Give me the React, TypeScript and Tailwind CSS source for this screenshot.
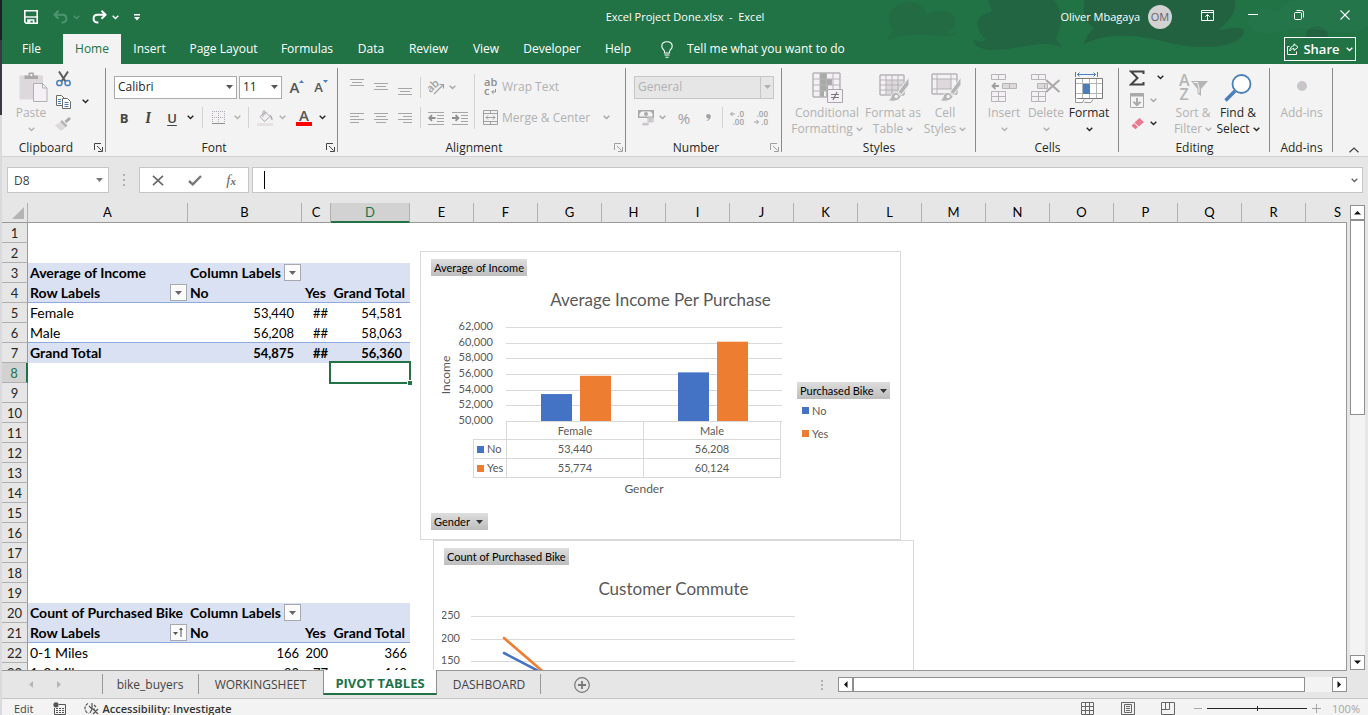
import { useState } from "react";
import type { ReactNode } from "react";

const RIBBON_TABS = [
  { name: "File", width: "w-[59px]" },
  { name: "Home", width: "w-[58px] ml-[2px]" },
  { name: "Insert", width: "w-[57px]" },
  { name: "Page Layout", width: "w-[91px]" },
  { name: "Formulas", width: "w-[76px]" },
  { name: "Data", width: "w-[52px]" },
  { name: "Review", width: "w-[63px]" },
  { name: "View", width: "w-[52px]" },
  { name: "Developer", width: "w-[80px]" },
  { name: "Help", width: "w-[52px]" },
];

const COLUMNS = "ABCDEFGHIJKLMNOPQRSTUVWXYZ".split("");

const SHEET_TABS = [
  { name: "bike_buyers", width: "w-[96px]" },
  { name: "WORKINGSHEET", width: "w-[125px]" },
  { name: "PIVOT TABLES", width: "w-[114px]" },
  { name: "DASHBOARD", width: "w-[104px]" },
];

type PivotRow = {
  kind: "title" | "head" | "item" | "last" | "total";
  cells: string[];
  inset?: boolean;
  sorted?: boolean;
};

const PIVOT_ROWS: Record<number, PivotRow> = {
  3: { kind: "title", cells: ["Average of Income", "Column Labels", "", ""] },
  4: { kind: "head", cells: ["Row Labels", "No", "Yes", "Grand Total"] },
  5: { kind: "item", cells: ["Female", "53,440", "##", "54,581"], inset: true },
  6: { kind: "last", cells: ["Male", "56,208", "##", "58,063"], inset: true },
  7: { kind: "total", cells: ["Grand Total", "54,875", "##", "56,360"], inset: true },
  20: { kind: "title", cells: ["Count of Purchased Bike", "Column Labels", "", ""] },
  21: { kind: "head", cells: ["Row Labels", "No", "Yes", "Grand Total"], sorted: true },
  22: { kind: "item", cells: ["0-1 Miles", "166", "200", "366"] },
  23: { kind: "item", cells: ["1-2 Miles", "92", "77", "169"] },
};

function Chevron({ className = "text-[#262626]" }: { className?: string }) {
  return (
    <svg width="7" height="5" viewBox="0 0 7 5" className={`shrink-0 ${className}`} aria-hidden="true">
      <path d="M0.7 0.8L3.5 3.6L6.3 0.8" fill="none" stroke="currentColor" strokeWidth="1.4" />
    </svg>
  );
}

function Caret({ className = "text-[#555]" }: { className?: string }) {
  return (
    <svg width="7" height="4" viewBox="0 0 7 4" className={`shrink-0 ${className}`} aria-hidden="true">
      <path d="M0 0H7L3.5 4Z" fill="currentColor" />
    </svg>
  );
}

function Tool({ label, className, children }: { label: string; className: string; children: ReactNode }) {
  return (
    <button type="button" aria-label={label} className={`flex h-[23px] shrink-0 items-center justify-center ${className}`}>
      {children}
    </button>
  );
}

function Divider({ className = "" }: { className?: string }) {
  return <span className={`h-[21px] w-px shrink-0 bg-[#d2d2d2] ${className}`} />;
}

function Group({ label, width, launcher, muted, children }: { label: string; width: string; launcher?: boolean; muted?: boolean; children: ReactNode }) {
  return (
    <section className={`relative flex shrink-0 flex-col pt-2 ${width}`}>
      <div className="flex h-[75px] items-start">{children}</div>
      <div className="flex h-[19px] items-center">
        <h2 className={`flex-1 text-center text-[#262626] ${launcher ? "pr-1" : ""}`}>{label}</h2>
        {launcher && (
          <button type="button" aria-label={`${label} settings`} className={`flex w-3 justify-start ${muted ? "text-[#a0a0a0]" : "text-[#444]"}`}>
            <svg width="9" height="9" viewBox="0 0 9 9" fill="none" stroke="currentColor">
              <path d="M0.5 7V0.5H7M3 3L7.5 7.5M8.5 4V8.5H4" />
            </svg>
          </button>
        )}
      </div>
      <span className="absolute top-1 right-0 h-[84px] w-px bg-[#8a8a8a]" />
    </section>
  );
}

function BigButton({ icon, lines, width, enabled, arrow = true }: { icon: ReactNode; lines: string[]; width: string; enabled?: boolean; arrow?: boolean }) {
  const single = lines.length === 1;
  return (
    <button type="button" className={`flex shrink-0 flex-col items-center leading-4 ${width} ${enabled ? "text-[#262626]" : "text-[#b1b1b1]"}`}>
      <span className="mb-[2px] flex h-[31px] items-center">{icon}</span>
      <span className="whitespace-nowrap">{lines[0]}</span>
      <span className="flex h-4 items-center gap-[3px] whitespace-nowrap">
        {!single && lines[1]}
        {arrow && <Chevron className="text-current" />}
      </span>
    </button>
  );
}

function TitleBar() {
  return (
    <div className="relative grid h-[34px] grid-cols-[1fr_auto_1fr] items-center text-[11px]">
      <div className="flex items-center pl-[22px]">
        <button type="button" aria-label="Save">
          <svg width="14" height="14" viewBox="0 0 14 14" fill="none" stroke="#fff" strokeWidth="1.6">
            <path d="M0.8 0.8H13.2V13.2H2.2L0.8 11.8Z" />
            <path d="M0.8 7H13.2" strokeWidth="1.4" />
            <path d="M4 13V10H9.6V13" />
            <path d="M5.6 10V12.6" strokeWidth="1.8" />
          </svg>
        </button>
        <button type="button" aria-label="Undo" className="ml-[15px] flex items-center gap-[5px] text-[#4f9470]">
          <svg width="15" height="14" viewBox="0 0 15 14" fill="none" stroke="currentColor" strokeWidth="2">
            <path d="M5.5 0.8L1.5 4.8L5.5 8.8M2 4.8H9.5C12 4.8 13.4 6.6 13.4 8.6C13.4 10.6 12 12.4 9.8 12.6H8.6" />
          </svg>
          <Chevron className="text-current" />
        </button>
        <button type="button" aria-label="Redo" className="ml-[12px] flex items-center gap-[5px] text-white">
          <svg width="15" height="14" viewBox="0 0 15 14" fill="none" stroke="currentColor" strokeWidth="2">
            <path d="M9.5 0.8L13.5 4.8L9.5 8.8M13 4.8H5.5C3 4.8 1.6 6.6 1.6 8.6C1.6 10.6 3 12.4 5.2 12.6H6.4" />
          </svg>
          <Chevron className="text-current" />
        </button>
        <button type="button" aria-label="Customize quick access toolbar" className="ml-[15px] text-white">
          <svg width="6" height="7" viewBox="0 0 6 7">
            <path d="M0 0H6V1.4H0ZM0 3H6L3 6.5Z" fill="currentColor" />
          </svg>
        </button>
      </div>
      <h1 className="whitespace-pre">Excel Project Done.xlsx  -  Excel</h1>
      <div className="flex items-center justify-end">
        <button type="button" className="flex items-center gap-2">
          <span>Oliver Mbagaya</span>
          <span className="flex size-6 items-center justify-center rounded-full bg-[#d2d2d2] text-[#5d6470]">OM</span>
        </button>
        <button type="button" aria-label="Ribbon display options" className="ml-3 flex w-[46px] justify-center pb-1">
          <svg width="13" height="11" viewBox="0 0 13 11" fill="none" stroke="#fff">
            <path d="M0.5 0.5H12.5V10.5H0.5ZM0.5 2.5H12.5M6.5 10V4.8M4.3 6.7L6.5 4.5L8.7 6.7" />
          </svg>
        </button>
        <button type="button" aria-label="Minimize" className="flex w-[46px] justify-center pb-1">
          <svg width="10" height="10" viewBox="0 0 10 10"><path d="M0 4.5H10" stroke="#fff" /></svg>
        </button>
        <button type="button" aria-label="Restore" className="flex w-[46px] justify-center pb-1">
          <svg width="10" height="10" viewBox="0 0 10 10" fill="none" stroke="#fff">
            <rect x="0.5" y="2.5" width="7" height="7" rx="1" />
            <path d="M2.5 0.5H7.5Q9.5 0.5 9.5 2.5V7.5" />
          </svg>
        </button>
        <button type="button" aria-label="Close" className="flex w-[46px] justify-center pb-1">
          <svg width="10" height="10" viewBox="0 0 10 10" stroke="#fff" strokeWidth="1.1"><path d="M0.5 0.5L9.5 9.5M9.5 0.5L0.5 9.5" /></svg>
        </button>
      </div>
    </div>
  );
}

function Header({ tab, onTab }: { tab: string; onTab: (t: string) => void }) {
  return (
    <header className="relative bg-[#217346] text-white">
      <svg width="500" height="64" viewBox="0 0 500 64" className="absolute top-0 right-0" aria-hidden="true">
        <g fill="#236241">
          <path d="M20 40C20 36 24 33 25 30C16 20 22 2 42 2C52 2 56 10 60 14C70 10 84 10 87 18C89 28 82 32 76 33C84 34 88 33 91 32C80 42 50 28 20 40Z" opacity="0.45" />
          <path d="M105 39C110 42 116 42 118 40C104 26 108 14 124 12L120 0H186C196 14 194 24 188 38L194 48C178 38 150 50 124 50C112 50 104 44 105 39Z" opacity="0.8" />
          <path d="M216 0H367C370 14 356 26 350 30C360 30 376 24 376 32C372 48 334 50 306 44C270 34 240 32 216 44C217 38 222 32 226 28C214 20 216 10 216 0Z" />
          <path d="M438 37C438 29 443 26 449 26C455 26 460 30 460 37Z" />
        </g>
        <path d="M380 24C380 10 396 4 410 12C414 2 426 0 440 0H500V26C480 40 440 24 420 30C400 36 384 34 380 24Z" fill="#2b7b4f" opacity="0.4" />
      </svg>
      <TitleBar />
      <div className="relative flex h-[30px] items-stretch">
        <nav className="flex">
          {RIBBON_TABS.map((t) => (
            <button
              key={t.name}
              type="button"
              onClick={() => onTab(t.name)}
              className={`whitespace-nowrap ${t.width} ${tab === t.name ? "bg-[#f3f3f3] text-[#217346]" : ""}`}
            >
              {t.name}
            </button>
          ))}
        </nav>
        <button type="button" className="flex items-center gap-[14px] pl-[17px] whitespace-nowrap">
          <svg width="12" height="17" viewBox="0 0 12 17" fill="none" stroke="#fff" strokeWidth="1.1">
            <path d="M3.5 12V10.5C3.5 9 0.8 8 0.8 5.2C0.8 2.5 3 0.7 6 0.7S11.2 2.5 11.2 5.2C11.2 8 8.5 9 8.5 10.5V12ZM3.5 14H8.5M4.5 16.2H7.5" />
          </svg>
          Tell me what you want to do
        </button>
        <button type="button" className="mt-[3px] mr-3 ml-auto flex h-6 w-[72px] items-center justify-center gap-1 border border-white text-[13px] font-semibold">
          <svg width="12" height="12" viewBox="0 0 12 12" fill="none" stroke="#fff">
            <path d="M2.5 3.5H0.5V11.5H9.5V8.5M7 0.8L11 4.2L7 7.5V5.5C5 5.5 3.8 6.5 2.8 8C2.8 5 4.5 3 7 2.8Z" />
          </svg>
          Share
          <Chevron className="ml-[2px] text-current" />
        </button>
      </div>
    </header>
  );
}

function Lines({ align, count, offset }: { align: "left" | "center" | "right"; count: number; offset: number }) {
  const short = { left: [0, 9], center: [2, 12], right: [5, 14] }[align];
  return (
    <svg width="14" height="18" viewBox="0 0 14 18" stroke="#a6a6a6" aria-hidden="true">
      {Array.from({ length: count }, (_, i) => (
        <path key={i} d={`M${i % 2 ? short[0] : 0} ${offset + i * 3 + 0.5}H${i % 2 ? short[1] : 14}`} />
      ))}
    </svg>
  );
}

function Indent({ out }: { out?: boolean }) {
  return (
    <svg width="17" height="14" viewBox="0 0 17 14" fill="none" stroke="#a6a6a6" aria-hidden="true">
      <path d="M0 1.5H16M9 4.5H16M9 7.5H16M9 10.5H16M0 13.5H16" />
      <path d={out ? "M7.5 7H1.5M4 4.2L1.2 7L4 9.8" : "M0 7H6M3.6 4.2L6.4 7L3.6 9.8"} stroke="#8f8f8f" strokeWidth="1.8" />
    </svg>
  );
}

function Brush() {
  return (
    <g>
      <path d="M31 5L20 20L23.5 22.5L31 13Z" fill="#b5b5b5" stroke="#f3f3f3" />
      <path d="M19 20.5C15.5 20 13.5 22 13 25C12.6 26.8 11 28 9.5 28.3C14 30 21 29.5 23 24.5Z" fill="#b5b5b5" stroke="#f3f3f3" />
      <circle cx="18.2" cy="24.5" r="2.2" fill="#f3f3f3" />
    </g>
  );
}

function ClipboardGroup() {
  return (
    <Group label="Clipboard" width="w-[104px]" launcher>
      <div className="flex pl-[9px]">
        <BigButton
          width="w-10"
          lines={["Paste"]}
          icon={
            <svg width="29" height="31" viewBox="0 0 29 31" className="ml-[5px]">
              <path d="M0.5 3.5H24V27.5H0.5Z" fill="#dcd8dc" />
              <path d="M5.5 3.5H9.5V1.5Q9.5 0.5 10.5 0.5H14Q15 0.5 15 1.5V3.5H19V7H5.5Z" fill="#a9a9a9" />
              <rect x="11.3" y="2" width="2" height="2" fill="#f3f3f3" />
              <path d="M14.5 11.5H23.5L28 16V29.5H14.5Z" fill="#f4f0f6" stroke="#b0b0b0" />
              <path d="M23.5 11.5V16H28" fill="none" stroke="#b0b0b0" />
            </svg>
          }
        />
      </div>
      <div className="-mt-[5px] flex flex-col">
        <Tool label="Cut" className="w-6">
          <svg width="15" height="16" viewBox="0 0 15 16" fill="none">
            <path d="M3 0.5L9.5 10.5M12 0.5L5.5 10.5" stroke="#5c5c5c" strokeWidth="2" />
            <circle cx="3.4" cy="12" r="2.6" stroke="#4a7fbb" strokeWidth="1.5" />
            <circle cx="11.6" cy="12" r="2.6" stroke="#4a7fbb" strokeWidth="1.5" />
          </svg>
        </Tool>
        <div className="flex">
          <Tool label="Copy" className="w-6">
            <svg width="15" height="14" viewBox="0 0 15 14" fill="#fff" stroke="#6a6a6a">
              <path d="M0.5 0.5H5.5L8.5 3.5V10.5H0.5Z" />
              <path d="M6.5 3.5H11.5L14.5 6.5V13.5H6.5Z" />
              <path d="M2 4.5H5M2 6.5H5M2 8.5H5M8.5 7.5H12.5M8.5 9.5H12.5M8.5 11.5H12.5" stroke="#4a7fbb" />
            </svg>
          </Tool>
          <Tool label="Copy options" className="w-5"><Chevron /></Tool>
        </div>
        <Tool label="Format painter" className="w-6">
          <svg width="16" height="15" viewBox="0 0 16 15">
            <path d="M14 0L16 2L11.5 6L9.5 4Z" fill="#a9a9a9" />
            <path d="M7 3L12.5 8.5L10.5 10.5L5 5Z" fill="#b5b5b5" />
            <path d="M4.5 5.5L10 11L6 14L0 8.5Z" fill="#dcd8dc" />
          </svg>
        </Tool>
      </div>
    </Group>
  );
}

function FontGroup() {
  return (
    <Group label="Font" width="w-[232px]" launcher>
      <div className="flex flex-col pl-2">
        <div className="flex h-[30px] items-center">
          <label className="relative flex items-center">
            <span className="sr-only">Font name</span>
            <select className="h-[23px] w-[123px] appearance-none border border-[#ababab] bg-white pl-[3px] text-[#262626]">
              <option>Calibri</option>
            </select>
            <Caret className="pointer-events-none absolute right-1 text-[#555]" />
          </label>
          <label className="relative ml-[2px] flex items-center">
            <span className="sr-only">Font size</span>
            <select className="h-[23px] w-[43px] appearance-none border border-[#ababab] bg-white pl-[3px] text-[#262626]">
              <option>11</option>
            </select>
            <Caret className="pointer-events-none absolute right-1 text-[#555]" />
          </label>
          <Tool label="Increase font size" className="ml-[3px] w-6 text-[15px] font-semibold text-[#555]">
            A
            <svg width="5" height="3" viewBox="0 0 5 3" className="mb-3"><path d="M0 3H5L2.5 0Z" fill="#4a7fbb" /></svg>
          </Tool>
          <Tool label="Decrease font size" className="w-6 text-[13px] font-semibold text-[#555]">
            A
            <svg width="5" height="3" viewBox="0 0 5 3" className="mb-3"><path d="M0 0H5L2.5 3Z" fill="#4a7fbb" /></svg>
          </Tool>
        </div>
        <div className="-ml-[2px] flex h-[31px] items-center">
          <Tool label="Bold" className="w-6 text-[13px] font-bold text-[#444]">B</Tool>
          <Tool label="Italic" className="w-6 font-serif text-[15px] font-semibold text-[#444] italic">I</Tool>
          <Tool label="Underline" className="w-6 text-[13px] font-semibold text-[#444] underline underline-offset-2">U</Tool>
          <Tool label="Underline options" className="w-3"><Chevron /></Tool>
          <Divider className="mx-[6px]" />
          <Tool label="Borders" className="w-5">
            <svg width="14" height="14" viewBox="0 0 14 14" fill="none" stroke="#b1a8b5" strokeDasharray="1 1">
              <path d="M0.5 0V13M6.5 0V13M12.5 0V13M0 0.5H13M0 6.5H13" />
              <path d="M0 12.5H13" stroke="#8f8f8f" strokeDasharray="none" />
            </svg>
          </Tool>
          <Tool label="Border options" className="w-4"><Chevron className="text-[#b1b1b1]" /></Tool>
          <Divider className="mx-[3px]" />
          <Tool label="Fill color" className="w-[26px]">
            <svg width="17" height="16" viewBox="0 0 17 16" fill="none">
              <path d="M3 6.5L8.5 2L13 6.5L7.5 11.5Z" fill="#f4f0f6" stroke="#a9a9a9" />
              <path d="M6 7V1.5Q7 0 8 1.5V5" stroke="#a9a9a9" />
              <path d="M12.5 4.5Q16 6 15.5 10.5Q13.5 10 13.5 7Z" fill="#a9a9a9" />
              <path d="M0 13H16V16H0Z" fill="#e5e1e5" />
            </svg>
          </Tool>
          <Tool label="Fill options" className="w-2"><Chevron className="text-[#b1b1b1]" /></Tool>
          <Tool label="Font color" className="ml-1 w-7 flex-col text-[15px] leading-3 font-semibold text-[#555]">
            A
            <span className="mt-px h-1 w-4 bg-[#f00]" />
          </Tool>
          <Tool label="Font color options" className="w-2"><Chevron /></Tool>
        </div>
      </div>
    </Group>
  );
}

function AlignmentGroup() {
  return (
    <Group label="Alignment" width="w-[288px]" launcher muted>
      <div className="flex flex-col pl-[7px]">
        <div className="flex h-[30px] items-center">
          <Tool label="Top align" className="w-6"><Lines align="center" count={3} offset={1} /></Tool>
          <Tool label="Middle align" className="w-6"><Lines align="center" count={3} offset={5} /></Tool>
          <Tool label="Bottom align" className="w-6"><Lines align="center" count={3} offset={10} /></Tool>
          <Divider className="mx-[3px]" />
          <Tool label="Orientation" className="w-6">
            <svg width="17" height="16" viewBox="0 0 17 16" fill="none" stroke="#a0a0a0">
              <text x="-1" y="10" transform="rotate(-45 6 8)" fontSize="11" fontWeight="600" fill="#a0a0a0" stroke="none">ab</text>
              <path d="M6 15L15 6M11.5 5.5H15.5V9.5" strokeWidth="1.2" />
            </svg>
          </Tool>
          <Tool label="Orientation options" className="w-2"><Chevron className="text-[#a6a6a6]" /></Tool>
        </div>
        <div className="flex h-[31px] items-center">
          <Tool label="Align left" className="w-6"><Lines align="left" count={4} offset={4} /></Tool>
          <Tool label="Center" className="w-6"><Lines align="center" count={4} offset={4} /></Tool>
          <Tool label="Align right" className="w-6"><Lines align="right" count={4} offset={4} /></Tool>
          <Divider className="mx-[3px]" />
          <Tool label="Decrease indent" className="w-6"><Indent out /></Tool>
          <Tool label="Increase indent" className="w-6"><Indent /></Tool>
        </div>
      </div>
      <span className="mt-[2px] ml-[2px] h-[55px] w-px bg-[#d2d2d2]" />
      <div className="flex flex-col pl-2 text-[#b1b1b1]">
        <button type="button" className="flex h-[30px] items-center gap-1">
          <svg width="15" height="18" viewBox="0 0 15 18" fill="#8f8f8f">
            <text x="1" y="8" fontSize="11" fontWeight="600">ab</text>
            <text x="1" y="17" fontSize="11" fontWeight="600">c</text>
            <path d="M12.5 11V14H9M10.5 12.2L8.7 14L10.5 15.8" fill="none" stroke="#8f8f8f" />
          </svg>
          Wrap Text
        </button>
        <div className="flex h-[31px] items-center">
          <button type="button" className="flex items-center gap-1 whitespace-nowrap">
            <svg width="15" height="15" viewBox="0 0 15 15" fill="none" stroke="#a0a0a0">
              <path d="M0.5 0.5H14.5V14.5H0.5ZM0.5 3.5H14.5M0.5 11.5H14.5M7.5 0.5V3.5M7.5 11.5V14.5M3 7.5H12M5 5.5L3 7.5L5 9.5M10 5.5L12 7.5L10 9.5" />
            </svg>
            Merge &amp; Center
          </button>
          <Tool label="Merge options" className="w-8"><Chevron className="text-[#a6a6a6]" /></Tool>
        </div>
      </div>
    </Group>
  );
}

function Decimals({ up }: { up?: boolean }) {
  return (
    <svg width="16" height="16" viewBox="0 0 16 16" fill="#a0a0a0" aria-hidden="true">
      <text x="15" y="7" fontSize="8" textAnchor="end" fontWeight="600">{up ? ".0" : ".00"}</text>
      <text x="15" y="15" fontSize="8" textAnchor="end" fontWeight="600">{up ? ".00" : ".0"}</text>
      <path d={up ? "M6 4H1.5M3.5 2L1.5 4L3.5 6" : "M1 12H5.5M3.5 10L5.5 12L3.5 14"} fill="none" stroke="#a0a0a0" />
    </svg>
  );
}

function NumberGroup() {
  return (
    <Group label="Number" width="w-[156px]" launcher muted>
      <div className="flex flex-col pl-2">
        <div className="flex h-[30px] items-center">
          <label className="relative flex items-center">
            <span className="sr-only">Number format</span>
            <select className="h-[23px] w-[140px] appearance-none border border-[#c6c6c6] bg-[#e6e6e6] pl-[3px] text-[#b1b1b1]">
              <option>General</option>
            </select>
            <span className="pointer-events-none absolute right-0 flex h-[23px] w-[14px] items-center justify-center border-l border-[#c6c6c6]">
              <Caret className="text-[#b1b1b1]" />
            </span>
          </label>
        </div>
        <div className="flex h-[31px] items-center">
          <Tool label="Accounting format" className="w-6">
            <svg width="17" height="16" viewBox="0 0 17 16">
              <path d="M0 0H16V8H0Z" fill="#a9a9a9" />
              <path d="M1.5 1.5H14.5V6.5H1.5Z" fill="#f3f3f3" />
              <circle cx="8" cy="4" r="2" fill="#a9a9a9" />
              <path d="M1 1H4L1 4ZM12 1H15V4Z" fill="#a9a9a9" />
              <ellipse cx="12.5" cy="8.5" rx="3.5" ry="1.5" fill="#ccc6cc" />
              <ellipse cx="12.5" cy="11.2" rx="3.5" ry="1.3" fill="#ccc6cc" />
              <ellipse cx="7.5" cy="14" rx="3.5" ry="1.5" fill="#ccc6cc" />
            </svg>
          </Tool>
          <Tool label="Accounting options" className="w-2"><Chevron className="text-[#a6a6a6]" /></Tool>
          <Tool label="Percent" className="ml-[6px] w-6 text-[15px] leading-4 text-[#a0a0a0]">%</Tool>
          <Tool label="Comma" className="w-6">
            <svg width="5" height="7" viewBox="0 0 5 7" fill="#a0a0a0">
              <path d="M2.3 0C3.9 0 4.8 1 4.8 2.6C4.8 4.8 3.2 6.4 1 7L0.7 6.3C1.8 5.9 2.6 5.2 2.7 4.2C1.2 4.5 0.2 3.6 0.2 2.2C0.2 0.9 1.1 0 2.3 0Z" />
            </svg>
          </Tool>
          <Divider className="mx-[2px]" />
          <Tool label="Increase decimal" className="w-6"><Decimals up /></Tool>
          <Tool label="Decrease decimal" className="w-6"><Decimals /></Tool>
        </div>
      </div>
    </Group>
  );
}

function StylesGroup() {
  return (
    <Group label="Styles" width="w-[194px]">
      <div className="flex pl-2">
        <BigButton
          width="w-[74px]"
          lines={["Conditional", "Formatting"]}
          icon={
            <svg width="31" height="32" viewBox="0 0 31 32" fill="none" stroke="#b5b5b5">
              <path d="M1 1H28V25H1Z" fill="#f4f0f6" />
              <path d="M8 1H14V7H20V13H16V19H12V25H8Z" fill="#a9a9a9" stroke="none" />
              <path d="M1 1H28V25H1ZM1 7H28M1 13H28M1 19H28M8 1V25M14.5 1V25M21 1V25" />
              <path d="M15.5 17.5H30.5V30.5H15.5Z" fill="#f4f0f6" stroke="#a9a9a9" />
              <path d="M19 22.5H27M19 25.5H27M25 20L21 28" stroke="#777" strokeWidth="1.2" />
            </svg>
          }
        />
        <BigButton
          width="w-[58px]"
          lines={["Format as", "Table"]}
          icon={
            <svg width="31" height="31" viewBox="0 0 31 31" fill="none" stroke="#b5b5b5">
              <path d="M2 3H26V23H2Z" fill="#f4f0f6" />
              <path d="M8 8H26V23H8Z" fill="#dcd8dc" stroke="none" />
              <path d="M2 3H26V23H2ZM2 8H26M2 13H26M2 18H26M8 3V23M14 3V23M20 3V23" />
              <Brush />
            </svg>
          }
        />
        <BigButton
          width="w-[46px]"
          lines={["Cell", "Styles"]}
          icon={
            <svg width="31" height="31" viewBox="0 0 31 31" fill="none" stroke="#b5b5b5">
              <path d="M2 2H27V22H2Z" fill="#f4f0f6" />
              <path d="M7 7H21V17H7Z" fill="#dcd8dc" stroke="none" />
              <path d="M2 2H27V22H2ZM2 7H27M2 17H27M7 2V22M21 2V22" />
              <Brush />
            </svg>
          }
        />
      </div>
    </Group>
  );
}

function CellsGroup() {
  return (
    <Group label="Cells" width="w-[143px]">
      <div className="flex pl-2">
        <BigButton
          width="w-10"
          lines={["Insert"]}
          icon={
            <svg width="28" height="28" viewBox="0 0 28 28" fill="#f4f0f6" stroke="#b5b5b5">
              <path d="M1.5 0.5H15.5V5.5H1.5ZM8.5 0.5V5.5M1.5 17.5H15.5V27.5H1.5ZM8.5 17.5V27.5M1.5 22.5H15.5" />
              <path d="M12.5 9.5H26.5V14.5H12.5ZM19.5 9.5V14.5" fill="#dcd8dc" />
              <path d="M9 12H3M5.5 9L2.5 12L5.5 15" fill="none" stroke="#a0a0a0" strokeWidth="1.8" />
            </svg>
          }
        />
        <BigButton
          width="w-11"
          lines={["Delete"]}
          icon={
            <svg width="30" height="28" viewBox="0 0 30 28" fill="#f4f0f6" stroke="#b5b5b5">
              <path d="M0.5 0.5H14.5V5.5H0.5ZM7.5 0.5V5.5M0.5 17.5H14.5V27.5H0.5ZM7.5 17.5V27.5M0.5 22.5H14.5" />
              <path d="M6.5 9.5H16.5V14.5H6.5ZM13.5 9.5V14.5" fill="#dcd8dc" />
              <path d="M15 6L28.5 18M28.5 6L15 18" fill="none" stroke="#a9a9a9" strokeWidth="2" />
            </svg>
          }
        />
        <BigButton
          enabled
          width="w-[42px]"
          lines={["Format"]}
          icon={
            <svg width="29" height="32" viewBox="0 0 29 32" fill="#fff" stroke="#7a7a7a">
              <path d="M0.5 0V5M22.5 0V5M2 2.5H21M4.5 0.5L2.5 2.5L4.5 4.5M18.5 0.5L20.5 2.5L18.5 4.5" fill="none" stroke="#4a7fbb" />
              <path d="M0.5 6.5H27.5V26.5H0.5Z" />
              <path d="M1 11.5H27M1 21.5H27M7.5 7V26M14.5 7V26M21.5 7V26" stroke="#b5b5b5" />
              <path d="M8 12H15V22H8Z" fill="#4a7fbb" stroke="none" />
              <path d="M0.5 26.5V30.5H7.5L9 27.5M9.5 30.5H16L18 27.5" fill="#fff" stroke="#9a9a9a" />
            </svg>
          }
        />
      </div>
    </Group>
  );
}

function EditingGroup() {
  return (
    <Group label="Editing" width="w-[151px]">
      <div className="-mt-[6px] flex w-14 flex-col pl-[6px]">
        <div className="flex">
          <Tool label="AutoSum" className="w-6">
            <svg width="16" height="16" viewBox="0 0 16 16" fill="none" stroke="#444" strokeWidth="2">
              <path d="M14.5 4V1.5H2L8.5 8L2 14.5H14.5V12" />
            </svg>
          </Tool>
          <Tool label="AutoSum options" className="w-[22px]"><Chevron /></Tool>
        </div>
        <div className="flex">
          <Tool label="Fill" className="w-6">
            <svg width="14" height="15" viewBox="0 0 14 15" fill="none" stroke="#a9a9a9">
              <path d="M0.5 0.5H13.5V14.5H0.5Z" />
              <path d="M0.5 1H13.5V3H0.5Z" fill="#a9a9a9" />
              <path d="M7 5V12M3.5 8.8L7 12.2L10.5 8.8" strokeWidth="2" />
            </svg>
          </Tool>
          <Tool label="Fill options" className="w-2"><Chevron className="text-[#a6a6a6]" /></Tool>
        </div>
        <div className="flex">
          <Tool label="Clear" className="w-6">
            <svg width="13" height="12" viewBox="0 0 13 12" fill="#e8798f">
              <path d="M8.5 0L13 4L8 8.5L3.5 4.5Z" />
              <path d="M3 5.2L7 9L4.5 11.2L0.5 8Z" />
            </svg>
          </Tool>
          <Tool label="Clear options" className="w-2"><Chevron /></Tool>
        </div>
      </div>
      <BigButton
        width="w-9"
        lines={["Sort &", "Filter"]}
        icon={
          <svg width="29" height="29" viewBox="0 0 29 29" fill="#b5b5b5">
            <text x="0" y="13" fontSize="16" fontWeight="600">A</text>
            <text x="0.5" y="27" fontSize="16" fontWeight="600">Z</text>
            <path d="M12 8H29L22 16V23L18.5 20.5V16Z" />
            <path d="M14.5 9.5H18.5L20 15V20" fill="none" stroke="#f3f3f3" />
          </svg>
        }
      />
      <BigButton
        enabled
        width="w-[54px]"
        lines={["Find &", "Select"]}
        icon={
          <svg width="28" height="28" viewBox="0 0 28 28" fill="none" stroke="#4a7fbb">
            <path d="M1.5 26.5L11 17" strokeWidth="3.6" />
            <circle cx="17.5" cy="10" r="9" fill="#fff" strokeWidth="1.8" />
          </svg>
        }
      />
    </Group>
  );
}

function Ribbon() {
  return (
    <div className="flex h-[93px] shrink-0 border-b border-[#d0d0d0] bg-[#f3f3f3]">
      <ClipboardGroup />
      <FontGroup />
      <AlignmentGroup />
      <NumberGroup />
      <StylesGroup />
      <CellsGroup />
      <EditingGroup />
      <Group label="Add-ins" width="w-[63px]">
        <BigButton
          width="w-full"
          lines={["Add-ins"]}
          arrow={false}
          icon={<span className="mb-1 size-[10px] rounded-full bg-[#c9c5c9]" />}
        />
      </Group>
      <button type="button" aria-label="Collapse ribbon" className="mr-[9px] mb-[3px] ml-auto self-end">
        <svg width="10" height="6" viewBox="0 0 10 6" fill="none" stroke="#444" strokeWidth="1.2"><path d="M0.5 5.3L5 1L9.5 5.3" /></svg>
      </button>
    </div>
  );
}

function FormulaBar() {
  return (
    <div className="flex h-[46px] shrink-0 items-start bg-[#e6e6e6] px-[5px] pt-[10px]">
      <label className="relative flex items-center">
        <span className="sr-only">Name box</span>
        <input defaultValue="D8" className="h-[26px] w-[102px] border border-[#c6c6c6] bg-white pl-[6px] text-[#444]" />
        <Caret className="pointer-events-none absolute right-[6px] text-[#777]" />
      </label>
      <svg width="2" height="12" viewBox="0 0 2 12" fill="#b0b0b0" className="mx-[14px] mt-[7px]">
        <path d="M0 0H2V2H0ZM0 5H2V7H0ZM0 10H2V12H0Z" />
      </svg>
      <div className="flex h-[26px] w-[110px] items-center justify-around border border-[#c6c6c6] bg-white text-[#6a6a6a]">
        <button type="button" aria-label="Cancel">
          <svg width="12" height="11" viewBox="0 0 12 11" stroke="currentColor" strokeWidth="1.7"><path d="M1 0.8L11 10.2M11 0.8L1 10.2" /></svg>
        </button>
        <button type="button" aria-label="Enter">
          <svg width="14" height="11" viewBox="0 0 14 11" fill="none" stroke="#777" strokeWidth="2.4"><path d="M1 6L4.8 9.4L13 1" /></svg>
        </button>
        <button type="button" aria-label="Insert function" className="font-['Liberation_Serif',serif] text-[15px] leading-4 italic">
          f<span className="text-[11px] font-bold">x</span>
        </button>
      </div>
      <label className="relative ml-[3px] flex flex-1 items-center">
        <span className="sr-only">Formula</span>
        <input className="h-[26px] w-full border border-[#c6c6c6] bg-white pl-3" />
        <span className="pointer-events-none absolute left-3 h-[18px] w-px bg-black" />
        <Chevron className="pointer-events-none absolute right-[5px] text-[#666]" />
      </label>
    </div>
  );
}

function FilterButton({ sorted }: { sorted?: boolean }) {
  return (
    <button type="button" aria-label="Filter" className="mr-px flex size-[17px] shrink-0 items-center justify-center border border-[#a6a9b0] bg-[#fbfbfb]">
      {sorted ? (
        <svg width="11" height="11" viewBox="0 0 11 11" fill="#555">
          <path d="M0 5H5L2.5 8ZM7.5 1H8.5V10H7.5ZM6 3L8 0.5L10 3Z" />
        </svg>
      ) : (
        <Caret className="text-[#666]" />
      )}
    </button>
  );
}

const CELL_TONE = {
  title: "bg-[#d9e1f2] font-bold",
  head: "bg-[#d9e1f2] font-bold border-b border-[#8ea9db]",
  item: "",
  last: "border-b border-[#8ea9db]",
  total: "bg-[#d9e1f2] font-bold",
};

function PivotCells({ row }: { row: PivotRow }) {
  const tone = CELL_TONE[row.kind];
  const numeric = row.kind !== "title" && row.kind !== "head";
  const pad = row.inset ? "pr-2" : "pr-[3px]";
  const figure = "pt-px text-[13px] leading-[18px]";
  return (
    <>
      <td className={`h-5 p-0 pl-[2px] align-top ${tone}`}>
        <div className="flex h-[19px] items-center justify-between">
          <span>{row.cells[0]}</span>
          {row.kind === "head" && <FilterButton sorted={row.sorted} />}
        </div>
      </td>
      {numeric ? (
        <td className={`h-5 p-0 text-right align-top ${figure} ${pad} ${tone}`}>{row.cells[1]}</td>
      ) : (
        <td className={`h-5 p-0 pl-[2px] align-top ${tone}`}>
          <div className="flex h-[19px] items-center justify-between">
            <span>{row.cells[1]}</span>
            {row.kind === "title" && <FilterButton />}
          </div>
        </td>
      )}
      <td className={`h-5 p-0 text-right align-top ${numeric ? `pr-[3px] ${figure}` : "pr-[5px]"} ${tone}`}>{row.cells[2]}</td>
      <td className={`h-5 p-0 text-right align-top ${numeric ? `${figure} ${pad}` : "pr-[5px]"} ${tone}`}>{row.cells[3]}</td>
    </>
  );
}

function FieldButton({ label, arrow }: { label: string; arrow?: boolean }) {
  return (
    <button type="button" className="flex h-[17px] shrink-0 items-center justify-between gap-[6px] self-start bg-linear-to-b from-[#dedede] to-[#bdbdbd] px-[3px] text-[11px] whitespace-nowrap text-black">
      {label}
      {arrow && <Caret className="mr-[2px] text-[#333]" />}
    </button>
  );
}

const INCOME = [
  { name: "No", color: "#4472c4", values: [53440, 56208] },
  { name: "Yes", color: "#ed7d31", values: [55774, 60124] },
];
const TICKS = [62000, 60000, 58000, 56000, 54000, 52000, 50000];

function Swatch({ series }: { series: string }) {
  return <span className={`size-[7px] shrink-0 ${series === "No" ? "bg-[#4472c4]" : "bg-[#ed7d31]"}`} />;
}

function IncomeChart() {
  const y = (v: number) => 106 - ((v - 50000) / 12000) * 94;
  return (
    <figure className="absolute top-12 left-[418px] flex h-[289px] w-[481px] flex-col border border-[#d9d9d9] bg-white pt-[7px] pl-[10px] font-[Lato,sans-serif] text-[11px] text-[#595959]">
      <FieldButton label="Average of Income" />
      <figcaption className="mt-[9px] -ml-[10px] h-[30px] text-center text-[17px] leading-[30px]">Average Income Per Purchase</figcaption>
      <div className="flex items-start">
        <div className="flex w-[351px] flex-col">
          <svg width="351" height="106" viewBox="0 0 351 106" fill="#595959" className="overflow-visible">
            {TICKS.map((t) => (
              <g key={t}>
                <path d={`M75 ${Math.round(y(t)) + 0.5}H351`} stroke="#d9d9d9" />
                <text x="62" y={y(t) + 3} fontSize="11" textAnchor="end">{t.toLocaleString("en-US")}</text>
              </g>
            ))}
            <text x="19" y="60" transform="rotate(-90 19 60)" fontSize="12" textAnchor="middle">Income</text>
            {INCOME.map((s, i) =>
              s.values.map((v, j) => (
                <rect key={`${i}-${j}`} x={110 + j * 137 + i * 39} y={y(v)} width="31" height={106 - y(v)} fill={s.color} />
              )),
            )}
          </svg>
          <table className="ml-[42px] w-[308px] table-fixed border-collapse text-center leading-4">
            <colgroup>
              <col className="w-[33px]" />
              <col />
              <col />
            </colgroup>
            <thead>
              <tr className="h-[18px]">
                <td className="p-0" />
                <th className="border border-[#d9d9d9] p-0 font-normal">Female</th>
                <th className="border border-[#d9d9d9] p-0 font-normal">Male</th>
              </tr>
            </thead>
            <tbody>
              {INCOME.map((s) => (
                <tr key={s.name} className="h-[19px]">
                  <th className="border border-[#d9d9d9] p-0 pl-[3px] font-normal">
                    <span className="flex items-center gap-[3px]"><Swatch series={s.name} />{s.name}</span>
                  </th>
                  {s.values.map((v) => (
                    <td key={v} className="border border-[#d9d9d9] p-0">{v.toLocaleString("en-US")}</td>
                  ))}
                </tr>
              ))}
            </tbody>
          </table>
          <span className="mt-[3px] ml-[75px] text-center text-[12px] leading-4">Gender</span>
        </div>
        <div className="mt-[67px] ml-[15px] flex w-[93px] flex-col">
          <div className="flex flex-col [&>button]:self-stretch"><FieldButton label="Purchased Bike" arrow /></div>
          <ul className="flex flex-col pl-[5px]">
            {INCOME.map((s) => (
              <li key={s.name} className="flex h-[23px] items-center gap-[3px]"><Swatch series={s.name} />{s.name}</li>
            ))}
          </ul>
        </div>
      </div>
      <div className="mt-auto mb-[9px] flex"><FieldButton label="Gender" arrow /></div>
    </figure>
  );
}

function CommuteChart() {
  return (
    <figure className="absolute top-[337px] left-[431px] flex h-[289px] w-[481px] flex-col border border-[#d9d9d9] bg-white pt-[7px] font-[Lato,sans-serif] text-[11px] text-[#595959]">
      <div className="flex pl-[10px]"><FieldButton label="Count of Purchased Bike" /></div>
      <figcaption className="mt-[9px] h-[30px] text-center text-[17px] leading-[30px]">Customer Commute</figcaption>
      <svg width="360" height="160" viewBox="0 0 360 160" fill="#595959" className="ml-2">
        {[250, 200, 150, 100, 50, 0].map((t, i) => (
          <g key={t}>
            <path d={`M29 ${Math.round(i * 22.5) + 12.5}H353`} stroke="#d9d9d9" />
            <text x="18" y={i * 22.5 + 15} fontSize="11" textAnchor="end">{t}</text>
          </g>
        ))}
        <path d="M62 49L127 83" stroke="#4472c4" strokeWidth="2.6" strokeLinecap="round" />
        <path d="M62 34L127 90" stroke="#ed7d31" strokeWidth="2.6" strokeLinecap="round" />
      </svg>
    </figure>
  );
}

function Sheet() {
  const rows = Array.from({ length: 30 }, (_, i) => i + 1);
  return (
    <div className="relative min-w-0 flex-1 overflow-hidden bg-white">
      <table className="w-[1790px] table-fixed border-separate border-spacing-0 font-[Lato,sans-serif] text-[14px] leading-[19px] text-black">
        <colgroup>
          <col className="w-[26px]" />
          <col className="w-[160px]" />
          <col className="w-[114px]" />
          <col className="w-[29px]" />
          <col className="w-[79px]" />
          {COLUMNS.slice(4).map((c) => <col key={c} className="w-[64px]" />)}
        </colgroup>
        <thead>
          <tr className="h-5 bg-[#e6e6e6]">
            <th className="h-5 border-r border-b border-r-[#b0b0b0] border-b-[#999] p-0">
              <svg width="12" height="12" viewBox="0 0 12 12" className="ml-[10px]"><path d="M12 0V12H0Z" fill="#b4b4b4" /></svg>
            </th>
            {COLUMNS.map((c) => (
              <th
                key={c}
                className={`h-5 border-r border-r-[#b0b0b0] p-0 align-top text-[13px] leading-[18px] font-normal ${c === "D" ? "border-b-2 border-b-[#217346] bg-[#d2d2d2] text-[#217346]" : "border-b border-b-[#999]"}`}
              >
                {c}
              </th>
            ))}
          </tr>
        </thead>
        <tbody>
          {rows.map((n) => (
            <tr key={n} className="h-5">
              <th className={`h-5 border-b border-b-[#b0b0b0] p-0 pt-px align-top text-[13px] leading-[18px] font-normal ${n === 8 ? "border-r-2 border-r-[#217346] bg-[#d2d2d2] text-[#217346]" : "border-r border-r-[#999] bg-[#e6e6e6] text-[#262626]"}`}>
                {n}
              </th>
              {PIVOT_ROWS[n] ? (
                <PivotCells row={PIVOT_ROWS[n]} />
              ) : (
                <>
                  <td colSpan={3} className="p-0" />
                  <td className="relative p-0">
                    {n === 8 && (
                      <span className="absolute -top-[2px] -right-px -bottom-px -left-[2px] border-2 border-[#217346]">
                        <span className="absolute -right-[3px] -bottom-[3px] size-[5px] border-t border-l border-white bg-[#217346]" />
                      </span>
                    )}
                  </td>
                </>
              )}
              <td colSpan={22} className="p-0" />
            </tr>
          ))}
        </tbody>
      </table>
      <IncomeChart />
      <CommuteChart />
      <span className="absolute top-[19px] right-0 bottom-0 w-px bg-[#999]" />
    </div>
  );
}

type Direction = "up" | "down" | "left" | "right";

const ARROWS: Record<Direction, string> = {
  up: "M0 5.5H7L3.5 2Z",
  down: "M0 1.5H7L3.5 5Z",
  left: "M5.5 0V7L2 3.5Z",
  right: "M1.5 0V7L5 3.5Z",
};

function ScrollButton({ dir }: { dir: Direction }) {
  return (
    <button type="button" aria-label={`Scroll ${dir}`} className="flex size-[15px] shrink-0 items-center justify-center border border-[#8f8f8f] bg-white">
      <svg width="7" height="7" viewBox="0 0 7 7"><path d={ARROWS[dir]} fill="#111" /></svg>
    </button>
  );
}

function BottomBar({ sheet, onSheet }: { sheet: string; onSheet: (s: string) => void }) {
  return (
    <div className="flex h-[29px] shrink-0 items-start border-b border-[#c6c6c6] bg-[#e6e6e6]">
      <div className="flex h-[28px] w-[100px] items-center gap-[24px] border-t border-[#999] pl-[27px]">
        <button type="button" aria-label="Previous sheet"><svg width="4" height="7" viewBox="0 0 4 7"><path d="M4 0V7L0 3.5Z" fill="#b5b5b5" /></svg></button>
        <button type="button" aria-label="Next sheet"><svg width="4" height="7" viewBox="0 0 4 7"><path d="M0 0V7L4 3.5Z" fill="#b5b5b5" /></svg></button>
      </div>
      {SHEET_TABS.map((t) =>
        t.name === sheet ? (
          <button key={t.name} type="button" className={`h-[25px] shrink-0 border-x border-b-2 border-x-[#8f8f8f] border-b-[#217346] bg-white pt-[2px] text-[13px] font-bold whitespace-nowrap text-[#217346] ${t.width}`}>
            {t.name}
          </button>
        ) : (
          <button
            key={t.name}
            type="button"
            onClick={() => onSheet(t.name)}
            className={`relative h-[28px] shrink-0 border-t border-[#999] whitespace-nowrap text-[#444] ${t.width}`}
          >
            {t.name}
            {t.name === "DASHBOARD" ? (
              <span className="absolute top-[3px] right-0 h-5 w-px bg-[#999]" />
            ) : (
              <span className="absolute top-[3px] left-0 h-5 w-px bg-[#999]" />
            )}
          </button>
        ),
      )}
      <div className="flex h-[28px] flex-1 items-center border-t border-[#999] pl-[33px]">
        <button type="button" aria-label="New sheet">
          <svg width="16" height="16" viewBox="0 0 16 16" fill="none" stroke="#777">
            <circle cx="8" cy="8" r="7.3" strokeWidth="1.2" />
            <path d="M8 4V12M4 8H12" strokeWidth="1.8" />
          </svg>
        </button>
        <svg width="2" height="10" viewBox="0 0 2 10" fill="#b0b0b0" className="ml-auto">
          <path d="M0 0H2V2H0ZM0 4H2V6H0ZM0 8H2V10H0Z" />
        </svg>
        <div className="ml-[15px] flex w-[509px] bg-[#f3f3f3]">
          <ScrollButton dir="left" />
          <span className="h-[15px] w-[452px] border border-[#8f8f8f] bg-white" />
          <span className="flex-1" />
          <ScrollButton dir="right" />
        </div>
      </div>
      <span className="w-[21px]" />
    </div>
  );
}

function StatusBar() {
  return (
    <footer className="flex h-4 shrink-0 items-start bg-[#f3f3f3] pl-3 text-[11px] leading-5 text-[#444]">
      <span>Edit</span>
      <button type="button" aria-label="Record macro" className="mt-[3px] ml-[19px]">
        <svg width="13" height="13" viewBox="0 0 13 13" fill="none" stroke="#555">
          <path d="M6 2.5H12.5V12.5H1.5V6" />
          <circle cx="3" cy="2.8" r="2.6" fill="#555" stroke="none" />
          <path d="M3 6.5H5M6 6.5H8M9 6.5H11M3 8.5H5M6 8.5H8M9 8.5H11M3 10.5H5M6 10.5H8M9 10.5H11" />
        </svg>
      </button>
      <button type="button" className="ml-[18px] flex gap-[4px] font-semibold text-[#333]">
        <svg width="15" height="13" viewBox="0 0 15 13" fill="none" stroke="#555" strokeWidth="1.2" className="mt-[3px]">
          <path d="M4 1.5A5.5 5.5 0 0 0 4.5 11.5" strokeDasharray="3 1" />
          <path d="M8 1V7M5 4L8 7H11M8 7L6 11M9 7L14 12M14 7L9 12M10 3L12 5" />
        </svg>
        Accessibility: Investigate
      </button>
      <div className="mt-[3px] mr-2 ml-auto flex items-center">
        <button type="button" aria-label="Normal view">
          <svg width="13" height="13" viewBox="0 0 13 13" fill="none" stroke="#666"><path d="M0.5 0.5H12.5V12.5H0.5ZM0.5 4.5H12.5M0.5 8.5H12.5M4.5 0.5V12.5M8.5 0.5V12.5" /></svg>
        </button>
        <button type="button" aria-label="Page layout view" className="ml-[27px]">
          <svg width="14" height="13" viewBox="0 0 14 13" fill="none" stroke="#666"><path d="M0.5 0.5H13.5V12.5H0.5ZM3.5 2.5H10.5V10.5H3.5ZM5 4.5H9M5 6.5H9M5 8.5H9" /></svg>
        </button>
        <button type="button" aria-label="Page break preview" className="ml-[26px]">
          <svg width="14" height="13" viewBox="0 0 14 13" fill="none" stroke="#666"><path d="M0.5 0.5H13.5V12.5H0.5ZM4.5 0.5V7.5M8.5 0.5V7.5H0.5" /></svg>
        </button>
        <span className="ml-[19px] h-px w-2 bg-[#a6a6a6]" />
        <label className="relative ml-[5px] flex h-3 w-[100px] items-center">
          <span className="sr-only">Zoom</span>
          <input type="range" className="absolute inset-0 w-full opacity-0" />
          <span className="h-px w-full bg-[#262626]" />
          <span className="absolute left-[50px] h-[5px] w-px bg-[#262626]" />
        </label>
        <svg width="9" height="9" viewBox="0 0 9 9" stroke="#a6a6a6" className="ml-[5px]"><path d="M4.5 0V9M0 4.5H9" /></svg>
        <span className="ml-[11px] leading-3 text-[#a6a6a6]">100%</span>
      </div>
    </footer>
  );
}

export default function App() {
  const [tab, setTab] = useState("Home");
  const [sheet, setSheet] = useState("PIVOT TABLES");
  return (
    <div className="flex h-screen overflow-hidden font-['Open_Sans',sans-serif] text-[12px] leading-4">
      <div className="flex w-[2px] shrink-0 flex-col bg-[#d9d9de]">
        <span className="h-10 bg-[#1d1d22]" />
        <span className="h-[75px] bg-[#3a3a44]" />
      </div>
      <div className="flex min-w-0 flex-1 flex-col">
        <Header tab={tab} onTab={setTab} />
        <Ribbon />
        <FormulaBar />
        <main className="flex min-h-0 flex-1">
          <Sheet />
          <div className="flex w-[21px] shrink-0 flex-col bg-[#e6e6e6] px-[3px] pt-[2px]">
            <ScrollButton dir="up" />
            <div className="flex w-[15px] flex-1 flex-col bg-[#f3f3f3]">
              <span className="h-[195px] border border-[#8f8f8f] bg-white" />
            </div>
            <ScrollButton dir="down" />
          </div>
        </main>
        <BottomBar sheet={sheet} onSheet={setSheet} />
        <StatusBar />
      </div>
    </div>
  );
}
